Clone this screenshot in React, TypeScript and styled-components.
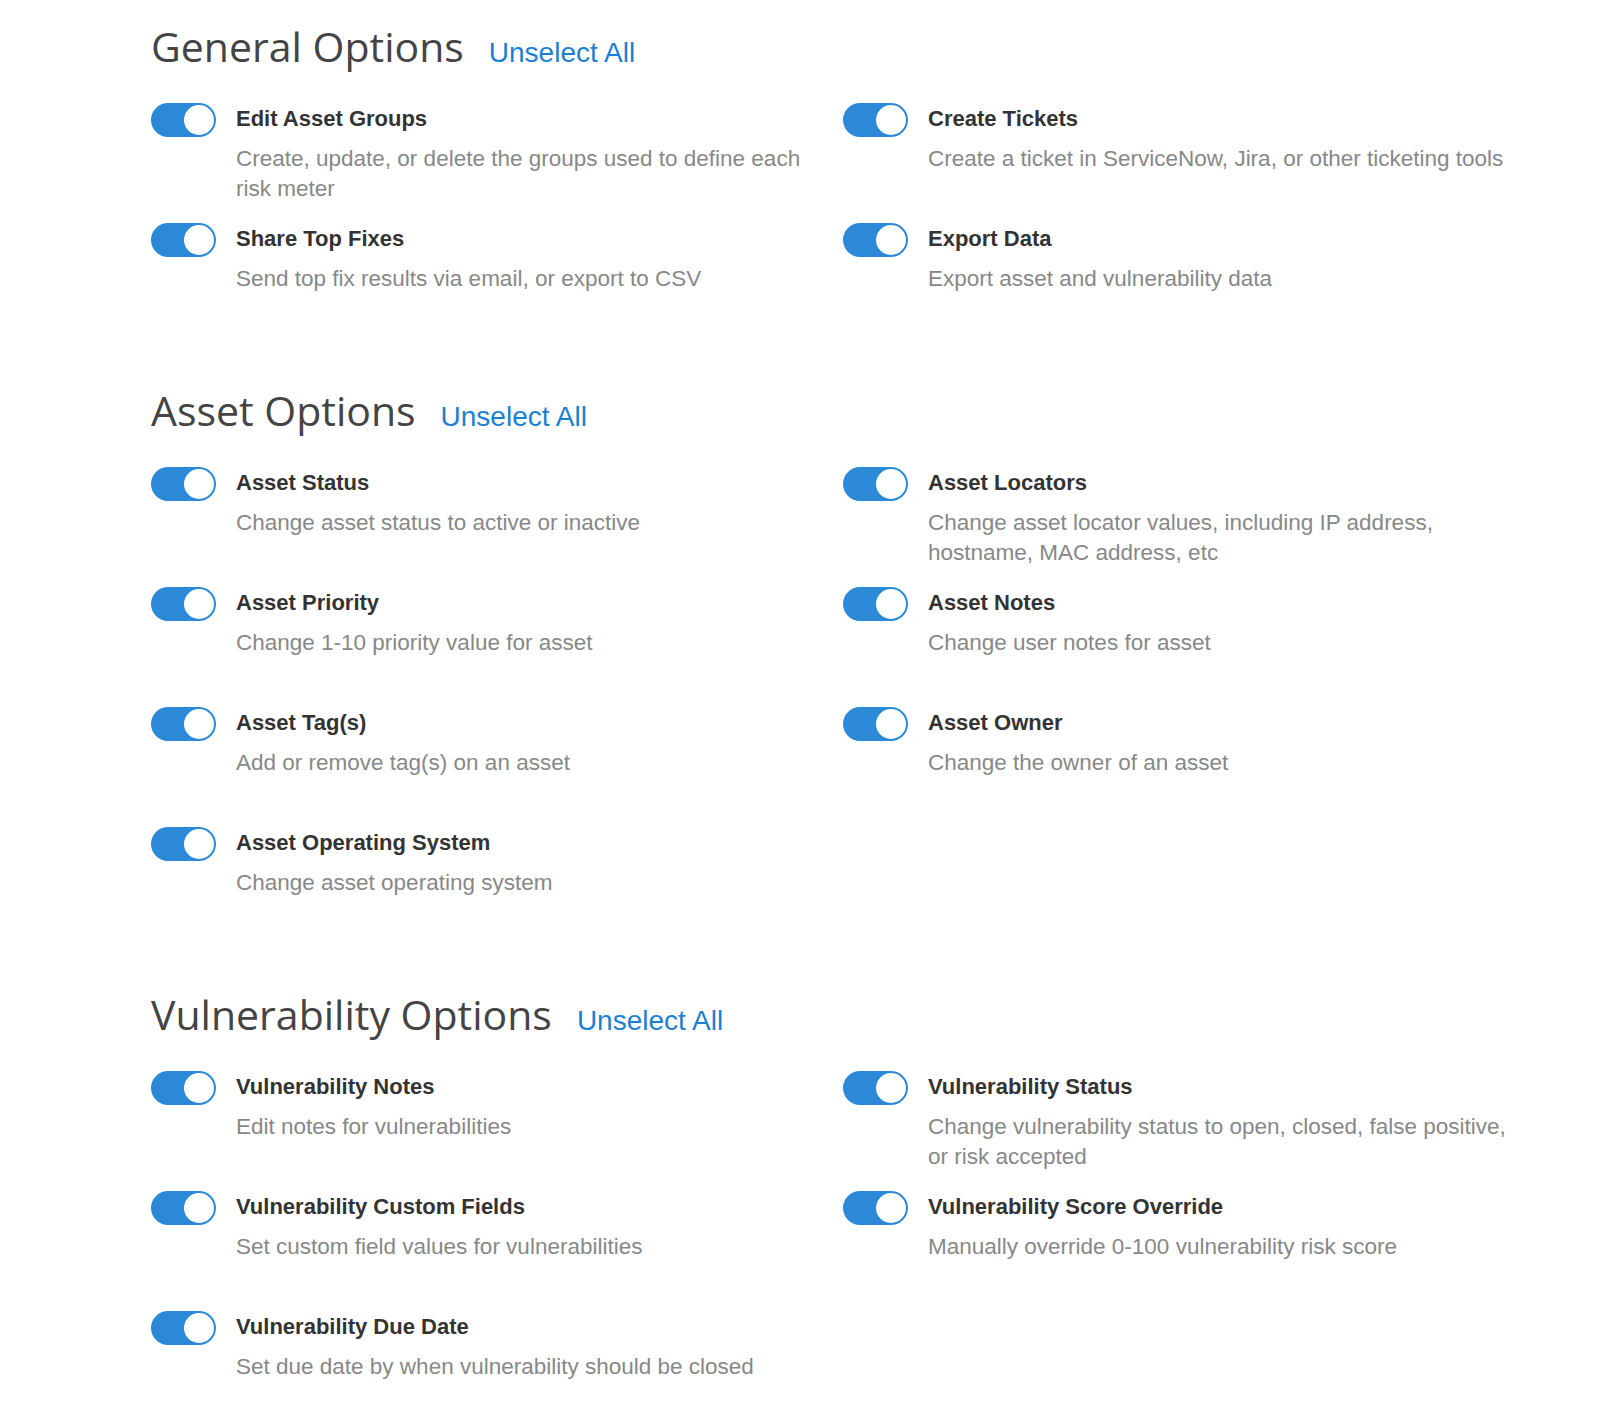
import React, { useState } from "react";
import styled, { createGlobalStyle } from "styled-components";

const GlobalStyle = createGlobalStyle`
  html, body {
    margin: 0;
    padding: 0;
    background: #ffffff;
  }
  body {
    font-family: "Liberation Sans", Arial, Helvetica, sans-serif;
    -webkit-font-smoothing: antialiased;
  }
`;

type Option = { key: string; title: string; desc: string };
type Section = { key: string; title: string; options: Option[] };

const SECTIONS: Section[] = [
  {
    key: "general",
    title: "General Options",
    options: [
      { key: "g1", title: "Edit Asset Groups", desc: "Create, update, or delete the groups used to define each risk meter" },
      { key: "g2", title: "Create Tickets", desc: "Create a ticket in ServiceNow, Jira, or other ticketing tools" },
      { key: "g3", title: "Share Top Fixes", desc: "Send top fix results via email, or export to CSV" },
      { key: "g4", title: "Export Data", desc: "Export asset and vulnerability data" },
    ],
  },
  {
    key: "asset",
    title: "Asset Options",
    options: [
      { key: "a1", title: "Asset Status", desc: "Change asset status to active or inactive" },
      { key: "a2", title: "Asset Locators", desc: "Change asset locator values, including IP address, hostname, MAC address, etc" },
      { key: "a3", title: "Asset Priority", desc: "Change 1-10 priority value for asset" },
      { key: "a4", title: "Asset Notes", desc: "Change user notes for asset" },
      { key: "a5", title: "Asset Tag(s)", desc: "Add or remove tag(s) on an asset" },
      { key: "a6", title: "Asset Owner", desc: "Change the owner of an asset" },
      { key: "a7", title: "Asset Operating System", desc: "Change asset operating system" },
    ],
  },
  {
    key: "vuln",
    title: "Vulnerability Options",
    options: [
      { key: "v1", title: "Vulnerability Notes", desc: "Edit notes for vulnerabilities" },
      { key: "v2", title: "Vulnerability Status", desc: "Change vulnerability status to open, closed, false positive, or risk accepted" },
      { key: "v3", title: "Vulnerability Custom Fields", desc: "Set custom field values for vulnerabilities" },
      { key: "v4", title: "Vulnerability Score Override", desc: "Manually override 0-100 vulnerability risk score" },
      { key: "v5", title: "Vulnerability Due Date", desc: "Set due date by when vulnerability should be closed" },
    ],
  },
];

const Page = styled.main`
  padding: 26px 0 0 151px;
`;

const SectionBlock = styled.section`
  margin-bottom: 47.5px;
`;

const SectionHeader = styled.header`
  display: flex;
  align-items: baseline;
  gap: 25px;
  height: 40px;
  margin-bottom: 36.5px;
`;

const Heading = styled.h2`
  margin: 0;
  font-family: "Open Sans", "Liberation Sans", sans-serif;
  font-weight: 400;
  font-size: 41px;
  line-height: 40px;
  color: #444444;
`;

const LinkButton = styled.button`
  border: 0;
  background: none;
  padding: 0;
  cursor: pointer;
  font-family: "Liberation Sans", Arial, sans-serif;
  font-size: 28px;
  line-height: 26px;
  color: #1c7fd5;
`;

const Grid = styled.div`
  display: grid;
  grid-template-columns: 692px 692px;
  grid-auto-rows: 120px;
`;

const Item = styled.div`
  display: flex;
  align-items: flex-start;
  gap: 20px;
`;

const Track = styled.button<{ $on: boolean }>`
  flex: 0 0 auto;
  display: flex;
  align-items: center;
  justify-content: ${(p) => (p.$on ? "flex-end" : "flex-start")};
  box-sizing: border-box;
  width: 65px;
  height: 34px;
  padding: 0 2px;
  border: 0;
  border-radius: 17px;
  background: ${(p) => (p.$on ? "#2b89d7" : "#c9c9c9")};
  cursor: pointer;
`;

const Knob = styled.span`
  display: block;
  width: 30px;
  height: 30px;
  border-radius: 50%;
  background: #ffffff;
`;

const TextCol = styled.div`
  max-width: 590px;
`;

const Title = styled.div`
  font-size: 22px;
  line-height: 32px;
  font-weight: 700;
  color: #333333;
`;

const Desc = styled.div`
  margin-top: 9px;
  font-size: 22.5px;
  line-height: 30.5px;
  color: #888888;
`;

export default function App() {
  const [state, setState] = useState<Record<string, boolean>>(() => {
    const s: Record<string, boolean> = {};
    SECTIONS.forEach((sec) => sec.options.forEach((o) => (s[o.key] = true)));
    return s;
  });

  const toggle = (k: string) => setState((s) => ({ ...s, [k]: !s[k] }));
  const unselectAll = (sec: Section) =>
    setState((s) => {
      const n = { ...s };
      sec.options.forEach((o) => (n[o.key] = false));
      return n;
    });

  return (
    <>
      <GlobalStyle />
      <Page>
        {SECTIONS.map((sec) => (
          <SectionBlock key={sec.key}>
            <SectionHeader>
              <Heading>{sec.title}</Heading>
              <LinkButton onClick={() => unselectAll(sec)}>Unselect All</LinkButton>
            </SectionHeader>
            <Grid>
              {sec.options.map((o) => (
                <Item key={o.key}>
                  <Track
                    $on={state[o.key]}
                    role="switch"
                    aria-checked={state[o.key]}
                    onClick={() => toggle(o.key)}
                  >
                    <Knob />
                  </Track>
                  <TextCol>
                    <Title>{o.title}</Title>
                    <Desc>{o.desc}</Desc>
                  </TextCol>
                </Item>
              ))}
            </Grid>
          </SectionBlock>
        ))}
      </Page>
    </>
  );
}
